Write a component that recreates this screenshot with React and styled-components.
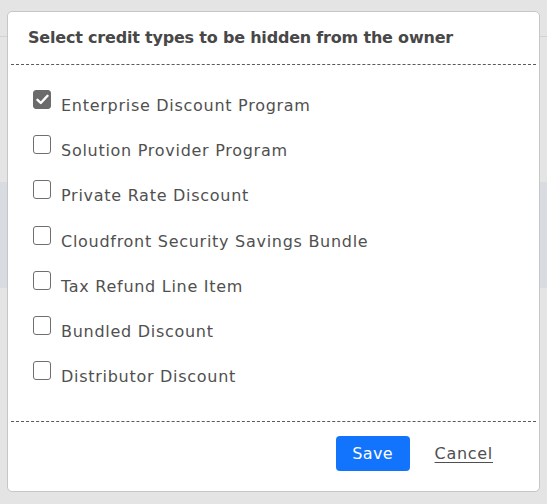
import React, { useState } from "react";
import styled, { createGlobalStyle } from "styled-components";

const Global = createGlobalStyle`
  html, body { margin: 0; padding: 0; }
  body {
    background: #e4e4e4;
    font-family: "DejaVu Sans", "Liberation Sans", sans-serif;
    overflow: hidden;
  }
  * { box-sizing: border-box; }
`;

const Page = styled.div`
  position: relative;
  height: 504px;
  display: flex;
  flex-direction: column;
  background: #e4e4e4;
`;

const PageHeader = styled.div`
  height: 37px;
  border-bottom: 1px solid #d2d2d2;
  flex-shrink: 0;
`;

const PageSpacer = styled.div`
  height: 145px;
  flex-shrink: 0;
`;

const PageBand = styled.div`
  height: 106px;
  background: #d8dbdf;
  flex-shrink: 0;
`;

const Modal = styled.div`
  position: absolute;
  top: 11px;
  left: 7px;
  width: 533px;
  height: 481px;
  background: #fff;
  border: 1px solid #c6c6c6;
  border-radius: 5px;
  display: flex;
  flex-direction: column;
`;

const Header = styled.div`
  padding: 15px 20px 15px 20px;
`;

const Title = styled.h2`
  margin: 0;
  font-size: 16px;
  line-height: 22px;
  font-weight: 700;
  letter-spacing: -0.2px;
  color: #484848;
`;

const Divider = styled.div`
  margin: 0 3px;
  border-top: 1px dashed #5a5a5a;
`;

const List = styled.div`
  display: flex;
  flex-direction: column;
  padding: 18px 0 0 25px;
  height: 356px;
`;

const Row = styled.label`
  display: flex;
  align-items: flex-start;
  height: 45.2px;
  cursor: pointer;
`;

const Box = styled.span`
  width: 18px;
  height: 19px;
  margin: 7px 10px 0 0;
  border-radius: 3px;
  flex-shrink: 0;
  display: flex;
  align-items: center;
  justify-content: center;
  background: ${(p) => (p.$checked ? "#6b6b6b" : "#fff")};
  border: 1px solid ${(p) => (p.$checked ? "#6b6b6b" : "#6f6f6f")};
`;

const Label = styled.span`
  font-size: 16px;
  line-height: 22px;
  letter-spacing: 0.72px;
  padding-top: 12px;
  color: #505050;
`;

const Footer = styled.div`
  display: flex;
  justify-content: flex-end;
  align-items: center;
  padding: 14px 34px 0 0;
  gap: 13px;
`;

const SaveButton = styled.button`
  width: 74px;
  height: 35px;
  border: none;
  border-radius: 4px;
  background: #1273fd;
  color: #fff;
  font-family: inherit;
  font-size: 16px;
  letter-spacing: 0.4px;
  cursor: pointer;
`;

const CancelButton = styled.button`
  background: none;
  border: none;
  padding: 0 12px;
  height: 35px;
  font-family: inherit;
  font-size: 16px;
  letter-spacing: 0.7px;
  color: #4f4f4f;
  text-decoration: underline;
  text-underline-offset: 3px;
  cursor: pointer;
`;

const items = [
  "Enterprise Discount Program",
  "Solution Provider Program",
  "Private Rate Discount",
  "Cloudfront Security Savings Bundle",
  "Tax Refund Line Item",
  "Bundled Discount",
  "Distributor Discount",
];

export default function App() {
  const [checked, setChecked] = useState({ 0: true });
  return (
    <>
      <Global />
      <Page>
        <PageHeader />
        <PageSpacer />
        <PageBand />
        <Modal>
          <Header>
            <Title>Select credit types to be hidden from the owner</Title>
          </Header>
          <Divider />
          <List>
            {items.map((it, i) => (
              <Row key={it} onClick={() => setChecked((c) => ({ ...c, [i]: !c[i] }))}>
                <Box $checked={!!checked[i]}>
                  {checked[i] && (
                    <svg width="13" height="11" viewBox="0 0 13 11">
                      <path
                        d="M1.5 5.8 L4.8 9 L11.5 1.8"
                        fill="none"
                        stroke="#fff"
                        strokeWidth="2.4"
                        strokeLinecap="round"
                        strokeLinejoin="round"
                      />
                    </svg>
                  )}
                </Box>
                <Label>{it}</Label>
              </Row>
            ))}
          </List>
          <Divider />
          <Footer>
            <SaveButton>Save</SaveButton>
            <CancelButton>Cancel</CancelButton>
          </Footer>
        </Modal>
      </Page>
    </>
  );
}
